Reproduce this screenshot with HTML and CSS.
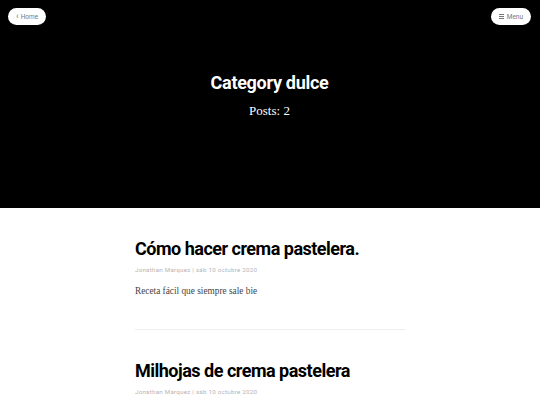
FILE: index.html
```html
<!DOCTYPE html>
<html lang="es">
<head>
<meta charset="utf-8">
<link rel="stylesheet" href="styles.css">
</head>
<body>
<header class="hero">
  <nav class="topbar">
    <a class="pill" href="#"><span class="chev">‹</span> Home</a>
    <a class="pill" href="#"><span class="burger"><i></i><i></i><i></i></span> Menu</a>
  </nav>
  <h1 class="hero-title">Category dulce</h1>
  <p class="hero-sub">Posts: 2</p>
</header>
<main class="posts">
  <article class="post">
    <h2 class="post-title">Cómo hacer crema pastelera.</h2>
    <p class="meta">Jonathan Marquez | sáb 10 octubre 2020</p>
    <p class="excerpt">Receta fácil que siempre sale bie</p>
  </article>
  <hr class="divider">
  <article class="post">
    <h2 class="post-title">Milhojas de crema pastelera</h2>
    <p class="meta">Jonathan Marquez | sáb 10 octubre 2020</p>
  </article>
</main>
</body>
</html>
```

FILE: styles.css
```css
* { box-sizing: border-box; }
html, body { margin: 0; padding: 0; background: #fff; }
body { font-family: Roboto, "Open Sans", sans-serif; }

.hero {
  background: #000;
  height: 208px;
  padding: 8px 9px 0 8px;
  display: flex;
  flex-direction: column;
  align-items: center;
}
.topbar {
  align-self: stretch;
  display: flex;
  justify-content: space-between;
}
.pill {
  height: 17px;
  padding: 0 8px;
  border-radius: 9px;
  background: #fff;
  color: #777;
  text-decoration: none;
  font-size: 6.5px;
  display: flex;
  align-items: center;
  gap: 2px;
}
.chev { font-size: 9px; line-height: 1; margin-top: -1px; }
.burger { display: inline-flex; flex-direction: column; gap: 1px; width: 5px; margin-right: 1px; }
.burger i { display: block; height: 1px; background: #777; }

.hero-title {
  margin: 47px 0 0;
  color: #fff;
  font-weight: 700;
  font-size: 18px;
  letter-spacing: -0.3px;
  line-height: 22px;
}
.hero-sub {
  margin: 9px 0 0;
  color: #fff;
  font-family: "Liberation Serif", serif;
  font-size: 13px;
  line-height: 16px;
}

.posts {
  width: 270px;
  margin: 0 auto;
  padding-top: 29px;
}
.post-title {
  margin: 0;
  color: #000;
  font-weight: 700;
  font-size: 18px;
  letter-spacing: -0.5px;
  line-height: 24px;
}
.meta {
  margin: 5px 0 0;
  font-size: 6.2px;
  letter-spacing: 0.25px;
  color: #b5b5b5;
  line-height: 8px;
}
.excerpt {
  margin: 11px 0 0;
  font-family: "Liberation Serif", serif;
  font-size: 9.3px;
  color: #444;
  line-height: 12px;
}
.divider {
  border: 0;
  border-top: 1px solid #eee;
  margin: 32px 0 29px;
}
```
